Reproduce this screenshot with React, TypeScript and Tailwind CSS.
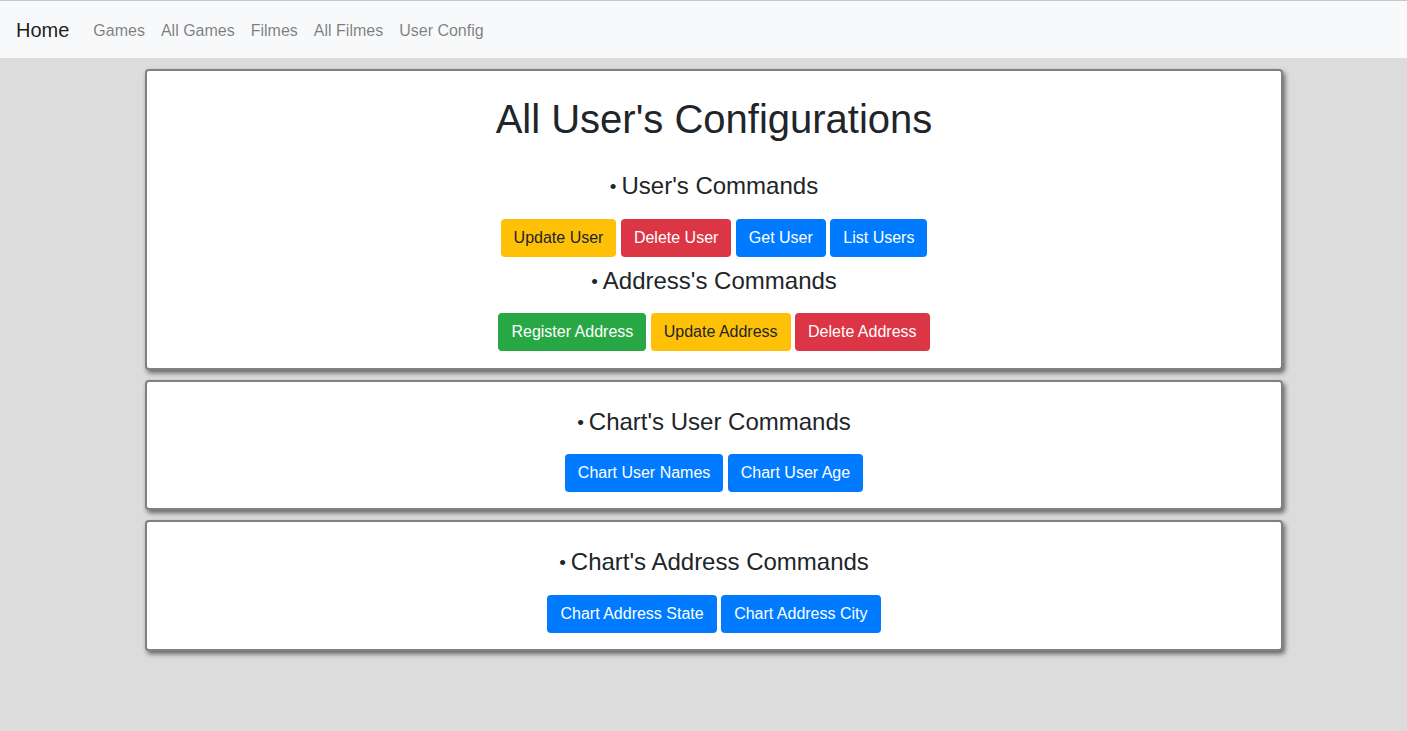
import React from "react";

type Variant = "warning" | "danger" | "primary" | "success";

const variantClass: Record<Variant, string> = {
  warning: "bg-[#ffc107] text-[#212529]",
  danger: "bg-[#dc3545] text-white",
  primary: "bg-[#007bff] text-white",
  success: "bg-[#28a745] text-white",
};

function Btn({ v, children }: { v: Variant; children: React.ReactNode }) {
  return (
    <button
      className={`inline-block align-middle border border-transparent rounded-[4px] px-[12px] py-[6px] text-[16px] leading-[24px] ${variantClass[v]}`}
    >
      {children}
    </button>
  );
}

function Section({
  title,
  buttons,
}: {
  title: string;
  buttons: { v: Variant; t: string }[];
}) {
  return (
    <div className="mt-[10px]">
      <h4 className="text-[24px] leading-[28.8px] h-[28.8px] font-medium mb-[18px] pt-[1px]">
        <span className="text-[19px] leading-[0] mr-[5px] align-[1px]">•</span>
        {title}
      </h4>
      <div className="text-center leading-[38px] h-[38px]">
        {buttons.map((b, i) => (
          <React.Fragment key={b.t}>
            {i > 0 && " "}
            <Btn v={b.v}>{b.t}</Btn>
          </React.Fragment>
        ))}
      </div>
    </div>
  );
}

function Card({ children }: { children: React.ReactNode }) {
  return (
    <div className="ml-[145px] w-[1138px] bg-white border-2 border-[#808080] rounded-[4px] shadow-[2px_3px_5px_rgba(0,0,0,0.55)] pt-[15px] pb-[17px] text-center flex flex-col">
      {children}
    </div>
  );
}

export default function App() {
  return (
    <div
      className="min-h-[731px] bg-[#dcdcdc] text-[#212529]"
      style={{ fontFamily: '"Liberation Sans", Arial, sans-serif' }}
    >
      <nav className="h-[58px] bg-[#f8f9fa] border-t border-[#c8c8c8] flex items-center px-[16px] pt-[1px]">
        <span className="text-[20px] leading-[30px] text-[rgba(0,0,0,0.9)] mr-[16px]">Home</span>
        {["Games", "All Games", "Filmes", "All Filmes", "User Config"].map((l) => (
          <span key={l} className="px-[8px] text-[16px] leading-[24px] pt-[1px] text-[rgba(0,0,0,0.5)]">
            {l}
          </span>
        ))}
      </nav>
      <div className="pt-[11px] flex flex-col gap-[10px]">
        <Card>
          <h1 className="text-[40px] leading-[48px] font-medium mt-[9px] mb-[18px]">
            All User's Configurations
          </h1>
          <Section
            title="User's Commands"
            buttons={[
              { v: "warning", t: "Update User" },
              { v: "danger", t: "Delete User" },
              { v: "primary", t: "Get User" },
              { v: "primary", t: "List Users" },
            ]}
          />
          <Section
            title="Address's Commands"
            buttons={[
              { v: "success", t: "Register Address" },
              { v: "warning", t: "Update Address" },
              { v: "danger", t: "Delete Address" },
            ]}
          />
        </Card>
        <Card>
          <Section
            title="Chart's User Commands"
            buttons={[
              { v: "primary", t: "Chart User Names" },
              { v: "primary", t: "Chart User Age" },
            ]}
          />
        </Card>
        <Card>
          <Section
            title="Chart's Address Commands"
            buttons={[
              { v: "primary", t: "Chart Address State" },
              { v: "primary", t: "Chart Address City" },
            ]}
          />
        </Card>
      </div>
    </div>
  );
}
